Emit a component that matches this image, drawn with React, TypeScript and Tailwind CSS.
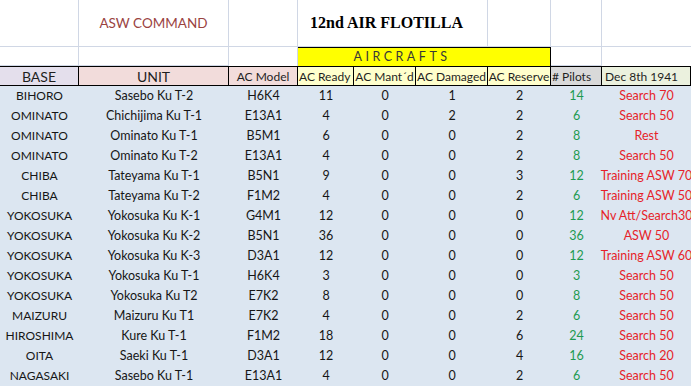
import React from 'react';

type Row = [string, string, string, number, number, number, number, number, string];

const rows: Row[] = [
  ['BIHORO', 'Sasebo Ku T-2', 'H6K4', 11, 0, 1, 2, 14, 'Search 70'],
  ['OMINATO', 'Chichijima Ku T-1', 'E13A1', 4, 0, 2, 2, 6, 'Search 50'],
  ['OMINATO', 'Ominato Ku T-1', 'B5M1', 6, 0, 0, 2, 8, 'Rest'],
  ['OMINATO', 'Ominato Ku T-2', 'E13A1', 4, 0, 0, 2, 8, 'Search 50'],
  ['CHIBA', 'Tateyama Ku T-1', 'B5N1', 9, 0, 0, 3, 12, 'Training ASW 70'],
  ['CHIBA', 'Tateyama Ku T-2', 'F1M2', 4, 0, 0, 2, 6, 'Training ASW 50'],
  ['YOKOSUKA', 'Yokosuka Ku K-1', 'G4M1', 12, 0, 0, 0, 12, 'Nv Att/Search30'],
  ['YOKOSUKA', 'Yokosuka Ku K-2', 'B5N1', 36, 0, 0, 0, 36, 'ASW 50'],
  ['YOKOSUKA', 'Yokosuka Ku K-3', 'D3A1', 12, 0, 0, 0, 12, 'Training ASW 60'],
  ['YOKOSUKA', 'Yokosuka Ku T-1', 'H6K4', 3, 0, 0, 0, 3, 'Search 50'],
  ['YOKOSUKA', 'Yokosuka Ku T2', 'E7K2', 8, 0, 0, 0, 8, 'Search 50'],
  ['MAIZURU', 'Maizuru Ku T1', 'E7K2', 4, 0, 0, 2, 6, 'Search 50'],
  ['HIROSHIMA', 'Kure Ku T-1', 'F1M2', 18, 0, 0, 6, 24, 'Search 50'],
  ['OITA', 'Saeki Ku T-1', 'D3A1', 12, 0, 0, 4, 16, 'Search 20'],
  ['NAGASAKI', 'Sasebo Ku T-1', 'E13A1', 4, 0, 0, 2, 6, 'Search 50'],
];

const grid = 'border-r border-b border-[#d0d7e5]';
const head = 'flex items-center justify-center pt-px whitespace-nowrap overflow-hidden border-t border-r border-b border-black text-[12px] text-[#1f1f1f]';

function cellClass(j: number) {
  const base = 'flex items-center justify-center whitespace-nowrap bg-[#dce6f1]';
  if (j === 0) return `${base} text-[12px]`;
  if (j === 7) return `${base} text-[#1e9a52]`;
  if (j === 8) return `${base} text-[#e61f2a]`;
  return base;
}

export default function App() {
  return (
    <div className="w-[691px] h-[386px] overflow-hidden bg-white text-[12.5px] text-[#161616] font-['Lato','Open_Sans',sans-serif]">
      <div className="grid grid-cols-[79px_150px_69px_56px_62px_72px_63px_51px_89px] grid-rows-[47px_19px_20px_repeat(15,20px)]">
        {/* title row */}
        <div className={grid} />
        <div className={`${grid} flex items-center justify-center text-[13.5px] text-[#9a433f]`}>ASW COMMAND</div>
        <div className={grid} />
        <div className={`${grid} col-span-3 flex items-center justify-center pr-3 font-['Liberation_Serif','DejaVu_Serif',serif] text-[16px] font-bold text-black`}>
          12nd AIR FLOTILLA
        </div>
        <div className={grid} />
        <div className={grid} />
        <div className="border-b border-[#d0d7e5]" />

        {/* group row */}
        <div className={grid} />
        <div className={grid} />
        <div className="border-r border-[#d0d7e5]" />
        <div className="col-span-4 flex items-center justify-center pr-[44px] border-t border-r border-black bg-[#ffff00] text-[12.5px] tracking-[3.5px] text-[#383838]">
          AIRCRAFTS
        </div>
        <div className={grid} />
        <div />

        {/* header row */}
        <div className={`${head} bg-[#e4dfec] !text-[14px]`}>BASE</div>
        <div className={`${head} bg-[#f2dcdb] !text-[14px]`}>UNIT</div>
        <div className={`${head} bg-[#f2dcdb]`}>AC Model</div>
        <div className={`${head} bg-[#ffffcc] justify-start pl-px`}>AC Ready</div>
        <div className={`${head} bg-[#ffffcc]`}>AC Mant´d</div>
        <div className={`${head} bg-[#ffffcc]`}>AC Damaged</div>
        <div className={`${head} bg-[#ffffcc]`}>AC Reserve</div>
        <div className={`${head} bg-[#d9d9d9] justify-start pl-px`}># Pilots</div>
        <div className={`${head} bg-[#ebf1de] justify-start pl-[3px]`}>Dec 8th 1941</div>

        {/* data rows */}
        {rows.map((r, i) => (
          <React.Fragment key={i}>
            {r.map((v, j) => (
              <div key={j} className={cellClass(j)}>
                {v}
              </div>
            ))}
          </React.Fragment>
        ))}
      </div>
    </div>
  );
}
